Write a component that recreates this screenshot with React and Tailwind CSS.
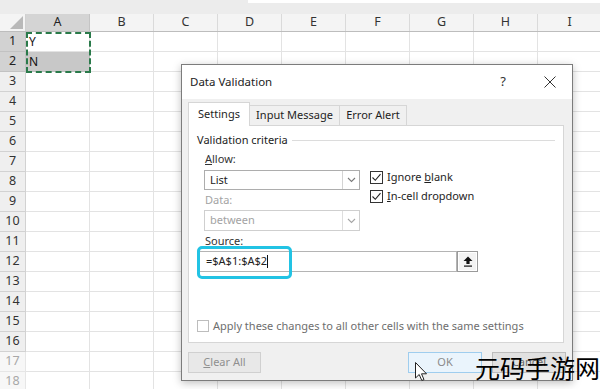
import React from "react";

const cols = ["A", "B", "C", "D", "E", "F", "G", "H", "I"];
const rows = Array.from({ length: 18 }, (_, i) => i + 1);

function Check() {
  return (
    <div className="w-[13px] h-[13px] border border-[#333] bg-white flex items-center justify-center shrink-0">
      <svg width="11" height="11" viewBox="0 0 11 11">
        <path d="M1.5 5.5 L4.3 8.3 L9.5 2.2" fill="none" stroke="#222" strokeWidth="1.1" />
      </svg>
    </div>
  );
}

function Chevron({ color }) {
  return (
    <svg width="9" height="6" viewBox="0 0 9 6">
      <path d="M1 1 L4.5 4.5 L8 1" fill="none" stroke={color} strokeWidth="1.1" />
    </svg>
  );
}

function Sheet() {
  return (
    <div className="w-[600px] h-[389px] overflow-hidden bg-white font-['Noto_Sans',sans-serif]">
      <div className="h-[14px] flex bg-[#ececec]">
        <div className="w-[248px] shrink-0" />
        <div className="flex-1 h-[3px] bg-white" />
      </div>
      <div className="flex h-[18px] bg-[#f4f4f4] border-b border-[#bdbdbd]">
        <div className="w-[26px] shrink-0 border-r border-[#d0d0d0] flex items-end justify-end pr-[2px] pb-[2px]">
          <svg width="13" height="13" viewBox="0 0 13 13">
            <path d="M13 0 L13 13 L0 13 Z" fill="#b9b9b9" />
          </svg>
        </div>
        {cols.map((c) => (
          <div
            key={c}
            className={
              c === "A"
                ? "w-[64px] shrink-0 flex items-center justify-center text-[12.5px] text-[#222] bg-[#d4d4d4] border-r border-[#c4c4c4]"
                : "w-[64px] shrink-0 flex items-center justify-center text-[12.5px] text-[#333] border-r border-[#dadada]"
            }
          >
            {c}
          </div>
        ))}
      </div>
      {rows.map((r) => (
        <div key={r} className="flex h-[20px]">
          <div
            className={
              r <= 2
                ? "w-[26px] shrink-0 flex items-center justify-center text-[12.5px] text-[#222] bg-[#d2d2d2] border-r border-b border-[#c2c2c2]"
                : r >= 17
                ? "w-[26px] shrink-0 flex items-center justify-center text-[12.5px] text-[#a8a8a8] bg-[#f7f7f7] border-r border-b border-[#e6e6e6]"
                : "w-[26px] shrink-0 flex items-center justify-center text-[12.5px] text-[#333] bg-[#efefef] border-r border-b border-[#d2d2d2]"
            }
          >
            {r}
          </div>
          {cols.map((c) => (
            <div
              key={c}
              className={
                c === "A" && r === 2
                  ? "w-[64px] shrink-0 border-r border-b border-[#bdbdbd] bg-[#c8c8c8] text-[12px] text-[#111] pl-[3px] flex items-center"
                  : "w-[64px] shrink-0 border-r border-b border-[#e3e3e3] text-[12px] text-[#111] pl-[3px] flex items-center"
              }
            >
              {c === "A" && r === 1 ? "Y" : c === "A" && r === 2 ? "N" : ""}
            </div>
          ))}
        </div>
      ))}
    </div>
  );
}

function Dialog() {
  return (
    <div className="absolute left-[181px] top-[64px] w-[392px] h-[317px] bg-[#f0f0f0] border border-[#7c7c7c] shadow-[0_2px_8px_rgba(0,0,0,0.25)] flex flex-col font-['Noto_Sans',sans-serif] text-[11px] text-[#1e1e1e]">
      <div className="h-[34px] bg-white flex items-center pl-[8px] pr-[12px] shrink-0">
        <div className="flex-1 text-[11.5px] text-[#222]">Data Validation</div>
        <div className="w-[20px] text-center text-[13px] text-[#333]">?</div>
        <div className="w-[27px]" />
        <div className="w-[20px] flex justify-center">
          <svg width="12" height="12" viewBox="0 0 12 12">
            <path d="M0.5 0.5 L11.5 11.5 M11.5 0.5 L0.5 11.5" stroke="#333" strokeWidth="1" />
          </svg>
        </div>
      </div>
      <div className="px-[6px] pt-[3px] flex flex-col">
        <div className="flex items-end h-[23px]">
          <div className="w-[62px] h-[24px] -mb-px bg-white border border-b-0 border-[#d6d6d6] flex items-center justify-center relative z-10">
            Settings
          </div>
          <div className="w-[90px] h-[20px] border-t border-r border-[#d6d6d6] flex items-center justify-center">
            Input Message
          </div>
          <div className="w-[67px] h-[20px] border-t border-r border-[#d6d6d6] flex items-center justify-center">
            Error Alert
          </div>
        </div>
        <div className="w-[376px] h-[218px] bg-white border border-[#d6d6d6] flex flex-col">
          <div className="mt-[6px] h-[16px] flex items-center pl-[8px] pr-[8px]">
            <span className="text-[#222]">Validation criteria</span>
            <div className="flex-1 h-px bg-[#dcdcdc] ml-[4px]" />
          </div>
          <div className="flex pl-[15px]">
            <div className="w-[156px] flex flex-col">
              <div className="h-[22px] flex items-center pl-[1px] text-[#333]">
                <span><u>A</u>llow:</span>
              </div>
              <div className="h-[20px] border border-[#adadad] bg-white flex items-center">
                <span className="flex-1 pl-[5px] text-[#222]">List</span>
                <div className="w-[17px] h-full border-l border-[#d4d4d4] flex items-center justify-center">
                  <Chevron color="#7a7a7a" />
                </div>
              </div>
              <div className="h-[20px] flex items-center pl-[1px] text-[#a3a3a3]">Data:</div>
              <div className="h-[21px] border border-[#cfcfcf] bg-white flex items-center">
                <span className="flex-1 pl-[5px] text-[#a3a3a3]">between</span>
                <div className="w-[17px] h-full border-l border-[#dedede] flex items-center justify-center">
                  <Chevron color="#a5a5a5" />
                </div>
              </div>
            </div>
            <div className="flex flex-col gap-[4px] pt-[22px] pl-[10px]">
              <div className="h-[15px] flex items-center gap-[4px]">
                <Check />
                <span>Ignore <u>b</u>lank</span>
              </div>
              <div className="h-[15px] flex items-center gap-[4px]">
                <Check />
                <span><u>I</u>n-cell dropdown</span>
              </div>
            </div>
          </div>
          <div className="h-[20px] flex items-center pl-[16px] text-[#333]">
            <span><u>S</u>ource:</span>
          </div>
          <div className="flex pl-[9px]">
            <div className="relative flex">
              <div className="w-[259px] h-[21px] border border-[#b4b4b4] bg-white flex items-center pl-[7px] text-[#222]">
                =$A$1:$A$2<span className="w-px h-[13px] bg-[#111]" />
              </div>
              <div className="w-[21px] h-[21px] border border-[#9a9a9a] bg-[#f3f3f3] flex items-center justify-center shadow-[inset_0_0_0_1px_#fff]">
                <svg width="10" height="11" viewBox="0 0 10 11">
                  <path d="M5 0.5 L9.5 5 L6.6 5 L6.6 8 L3.4 8 L3.4 5 L0.5 5 Z" fill="#111" />
                  <rect x="1" y="9.5" width="8" height="1.2" fill="#111" />
                </svg>
              </div>
              <div className="absolute left-[-1px] top-[-5px] w-[95px] h-[33px] border-[3px] border-[#22c3e4] rounded-[5px]" />
            </div>
          </div>
          <div className="mt-[47px] h-[14px] flex items-center pl-[8px] gap-[4px]">
            <div className="w-[12px] h-[12px] border border-[#bdbdbd] bg-white" />
            <span className="text-[#6e6e6e]">Apply these changes to all other cells with the same settings</span>
          </div>
        </div>
        <div className="flex mt-[9px] h-[21px]">
          <div className="w-[73px] h-[21px] border border-[#d0d0d0] bg-[#e8e8e8] flex items-center justify-center text-[#8f8f8f]">
            <span><u>C</u>lear All</span>
          </div>
          <div className="flex-1" />
          <div className="w-[74px] h-[21px] border border-[#9fcdee] bg-[#eaf4fc] flex items-center justify-center text-[#8a8a8a]">
            OK
          </div>
          <div className="w-[10px]" />
          <div className="w-[74px] h-[21px] border border-[#bdbdbd] bg-[#e1e1e1] flex items-center justify-center text-[#666]">
            Cancel
          </div>
        </div>
      </div>
    </div>
  );
}

export default function App() {
  return (
    <div className="relative w-[600px] h-[389px] overflow-hidden">
      <Sheet />
      <div className="absolute left-[26px] top-[32px] w-[65px] h-[41px] border-2 border-dashed border-[#2a7a4a]" />
      <Dialog />
      <svg className="absolute left-[415px] top-[362px]" width="13" height="20" viewBox="0 0 13 20">
        <path d="M0.5 0.5 L0.5 16 L4.2 12.5 L6.8 18.5 L9 17.6 L6.5 11.8 L11.5 11.8 Z" fill="#fff" stroke="#222" strokeWidth="1" />
      </svg>
      <div className="absolute left-[475px] top-[355px] text-[25px] leading-none text-black font-['Noto_Sans_CJK_SC',sans-serif] whitespace-nowrap">
        元码手游网
      </div>
    </div>
  );
}
